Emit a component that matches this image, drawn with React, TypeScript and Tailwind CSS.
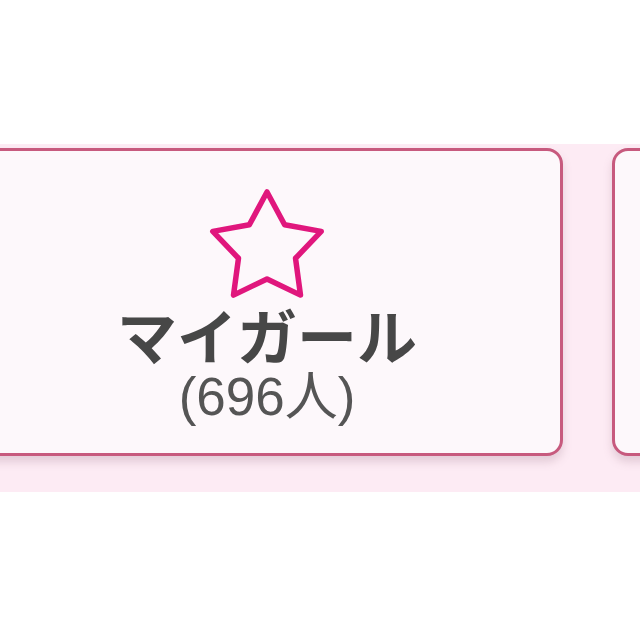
import React from "react";

const STAR_POINTS =
  "60,4 77.63,36.73 114.21,43.39 88.53,70.27 93.5,107.11 60,91 26.5,107.11 31.47,70.27 5.79,43.39 42.37,36.73";

function StarIcon() {
  return (
    <svg width="120" height="112" viewBox="0 0 120 112" className="block">
      <polygon
        points={STAR_POINTS}
        fill="none"
        stroke="#e0177d"
        strokeWidth="5.5"
        strokeLinejoin="round"
      />
    </svg>
  );
}

function MenuCard({ label, count }: { label: string; count?: number }) {
  return (
    <div className="w-[592px] h-[308px] shrink-0 rounded-[16px] border-[3px] border-[#c75a7e] bg-[#fdf8fb] shadow-[0_6px_8px_rgba(150,110,130,0.25)] flex flex-col items-center pt-[37px]">
      <StarIcon />
      <div
        className="mt-[4px] text-[60px] leading-[60px] font-bold text-[#474747]"
        style={{ fontFamily: '"Noto Sans CJK JP", sans-serif' }}
      >
        {label}
      </div>
      {count !== undefined && (
        <div
          className="mt-[6px] text-[53px] leading-[53px] text-[#555555]"
          style={{ fontFamily: '"Liberation Sans", "Noto Sans CJK JP", sans-serif' }}
        >
          ({count}人)
        </div>
      )}
    </div>
  );
}

export default function App() {
  return (
    <div className="w-[640px] h-[640px] bg-white overflow-hidden pt-[144px]">
      <div className="h-[348px] bg-[#fdebf4] pt-[4px] overflow-hidden">
        <div className="flex gap-[49px] -ml-[29px]">
          <MenuCard label="マイガール" count={696} />
          <MenuCard label="" />
        </div>
      </div>
    </div>
  );
}
